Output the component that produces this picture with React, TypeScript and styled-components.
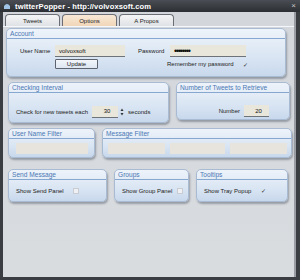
import styled, { createGlobalStyle } from "styled-components";

const GlobalStyle = createGlobalStyle`
  html, body {
    margin: 0;
    padding: 0;
    background: #3a3d42;
  }
  * {
    box-sizing: border-box;
  }
`;

const App = () => {
  return (
    <Window>
      <GlobalStyle />
      <TitleBar>
        <AppIcon viewBox="0 0 8 8">
          <path d="M1 7 L1 4 Q4 0 7 4 L7 7 Z" fill="#9ec3e6" />
        </AppIcon>
        <Title>twitterPopper - http://volvoxsoft.com</Title>
        <Close>×</Close>
      </TitleBar>
      <Body>
        <Tabs>
          <Tab>Tweets</Tab>
          <Tab active>Options</Tab>
          <Tab>A Propos</Tab>
        </Tabs>
        <Content>
          <Section height={49}>
            <Header>Account</Header>
            <AccountGrid>
              <Label>User Name</Label>
              <Input width={70}>volvoxsoft</Input>
              <Label>Password</Label>
              <Input width={76} dots>••••••••</Input>
              <span />
              <Button>Update</Button>
              <span />
              <CheckRow>
                Remember my password <Check checked />
              </CheckRow>
            </AccountGrid>
          </Section>

          <Row>
            <Section width={161} height={41}>
              <Header>Checking Interval</Header>
              <Line drop={8}>
                <Label>Check for new tweets each</Label>
                <Input width={26} align="center">30</Input>
                <Spinner viewBox="0 0 4 10">
                  <path d="M0.5 4 L2 1.5 L3.5 4 Z" fill="#333" />
                  <path d="M0.5 6 L2 8.5 L3.5 6 Z" fill="#333" />
                </Spinner>
                <Label>seconds</Label>
              </Line>
            </Section>
            <Section width={114} height={38}>
              <Header>Number of Tweets to Retrieve</Header>
              <Line justify="flex-end" pad={20} drop={10}>
                <Label>Number</Label>
                <Input width={25} align="center">20</Input>
              </Line>
            </Section>
          </Row>

          <Row>
            <Section width={87} height={30}>
              <Header>User Name Filter</Header>
              <FilterLine>
                <Field width={72} />
              </FilterLine>
            </Section>
            <Section width={190} height={30}>
              <Header>Message Filter</Header>
              <FilterLine>
                <Field width={57} />
                <Field width={55} />
                <Field width={57} />
              </FilterLine>
            </Section>
          </Row>

          <Row top={11}>
            <Section width={99} height={33}>
              <Header>Send Message</Header>
              <Line>
                <Label>Show Send Panel</Label>
                <Check />
              </Line>
            </Section>
            <Section width={75} height={33}>
              <Header>Groups</Header>
              <Line>
                <Label>Show Group Panel</Label>
                <Check tight />
              </Line>
            </Section>
            <Section width={92} height={33}>
              <Header>Tooltips</Header>
              <Line>
                <Label>Show Tray Popup</Label>
                <Check checked />
              </Line>
            </Section>
          </Row>
        </Content>
      </Body>
    </Window>
  );
};

export default App;

const Window = styled.div`
  width: 300px;
  height: 280px;
  background: #3a3d42;
  display: flex;
  flex-direction: column;
  font-family: "Liberation Sans", Arial, sans-serif;
  overflow: hidden;
`;

const TitleBar = styled.div`
  height: 12px;
  display: flex;
  align-items: center;
  padding: 0 4px 0 3px;
  background: linear-gradient(#4a4e54, #2c2f33);
`;

const AppIcon = styled.svg`
  width: 8px;
  height: 8px;
  margin-right: 4px;
`;

const Title = styled.div`
  flex: 1;
  color: #ffffff;
  font-size: 7.6px;
  font-weight: bold;
  letter-spacing: 0.1px;
`;

const Close = styled.div`
  color: #c8c8c8;
  font-size: 8px;
  line-height: 8px;
`;

const Body = styled.div`
  flex: 1;
  margin: 0 4px 3px 3px;
  background: linear-gradient(#d3d7dc, #d9dcdf);
  border-right: 2px solid #9a9ea4;
  display: flex;
  flex-direction: column;
`;

const Tabs = styled.div`
  display: flex;
  gap: 2px;
  padding: 2px 0 0 2px;
  height: 14px;
`;

const Tab = styled.div<{ active?: boolean }>`
  width: 55px;
  height: 12px;
  display: flex;
  align-items: center;
  justify-content: center;
  font-size: 6px;
  color: #222;
  border: 1px solid #6b6f75;
  border-bottom: none;
  border-radius: 4px 4px 0 0;
  background: ${(p) =>
    p.active
      ? "linear-gradient(#f7e8d6, #f1d6b8)"
      : "linear-gradient(#f4f5f6, #dfe2e5)"};
`;

const Content = styled.div`
  flex: 1;
  border-top: 1px solid #f4f7fb;
  padding: 1px 8px 0 3px;
  display: flex;
  flex-direction: column;
`;

const Section = styled.div<{ width?: number; height: number }>`
  width: ${(p) => (p.width ? `${p.width}px` : "auto")};
  height: ${(p) => p.height}px;
  border: 1px solid #a8bbd3;
  border-radius: 5px;
  background: linear-gradient(#eef3fa, #d9e5f3 60%, #c8d8ec);
  box-shadow: 1px 2px 2px rgba(70, 80, 95, 0.45);
  display: flex;
  flex-direction: column;
  flex-shrink: 0;
`;

const Header = styled.div`
  height: 10px;
  padding-left: 3px;
  font-size: 6.6px;
  line-height: 9px;
  color: #4b78b4;
  border-bottom: 1px solid #85a7d0;
`;

const AccountGrid = styled.div`
  display: grid;
  grid-template-columns: 35px 83px 32px auto;
  row-gap: 2px;
  align-items: center;
  padding: 6px 0 0 13px;
`;

const Row = styled.div<{ top?: number }>`
  display: flex;
  align-items: flex-start;
  gap: 7px;
  margin-top: ${(p) => p.top ?? 5}px;
  padding-left: 2px;
`;

const Line = styled.div<{ justify?: string; pad?: number; drop?: number }>`
  flex: 1;
  display: flex;
  align-items: center;
  gap: 4px;
  justify-content: ${(p) => p.justify ?? "flex-start"};
  padding: ${(p) => p.drop ?? 0}px ${(p) => p.pad ?? 0}px 0 7px;
`;

const FilterLine = styled.div`
  flex: 1;
  display: flex;
  align-items: center;
  justify-content: center;
  gap: 5px;
`;

const Label = styled.span`
  font-size: 6px;
  color: #222;
  white-space: nowrap;
`;

const Input = styled.div<{ width: number; align?: string; dots?: boolean }>`
  width: ${(p) => p.width}px;
  height: 12px;
  display: flex;
  align-items: center;
  justify-content: ${(p) => (p.align === "center" ? "center" : "flex-start")};
  padding-left: 4px;
  background: #e9e6dc;
  border-bottom: 1px solid #6e737a;
  font-size: ${(p) => (p.dots ? "9px" : "6px")};
  letter-spacing: ${(p) => (p.dots ? "-1.2px" : "0")};
  color: #111;
`;

const Field = styled.div<{ width: number }>`
  width: ${(p) => p.width}px;
  height: 11px;
  background: #e6e4dc;
`;

const Button = styled.div`
  width: 43px;
  height: 10px;
  display: flex;
  align-items: center;
  justify-content: center;
  font-size: 6px;
  color: #222;
  border: 1px solid #5d6470;
  border-radius: 1px;
  background: linear-gradient(#f3f6fa, #dde6f1);
`;

const CheckRow = styled.div`
  display: flex;
  align-items: center;
  gap: 4px;
  font-size: 6px;
  color: #222;
  margin-left: -3px;
`;

const Check = styled.span<{ checked?: boolean; tight?: boolean }>`
  width: 6px;
  height: 6px;
  margin-left: ${(p) => (p.tight ? 1 : 5)}px;
  display: inline-flex;
  align-items: center;
  justify-content: center;
  font-size: 6px;
  color: #333;
  border: ${(p) => (p.checked ? "none" : "1px solid #c9ccd2")};
  background: ${(p) => (p.checked ? "transparent" : "#eef0f3")};
  &::after {
    content: "${(p) => (p.checked ? "✓" : "")}";
  }
`;

const Spinner = styled.svg`
  width: 4px;
  height: 10px;
  margin: 0 0 0 -2px;
`;
